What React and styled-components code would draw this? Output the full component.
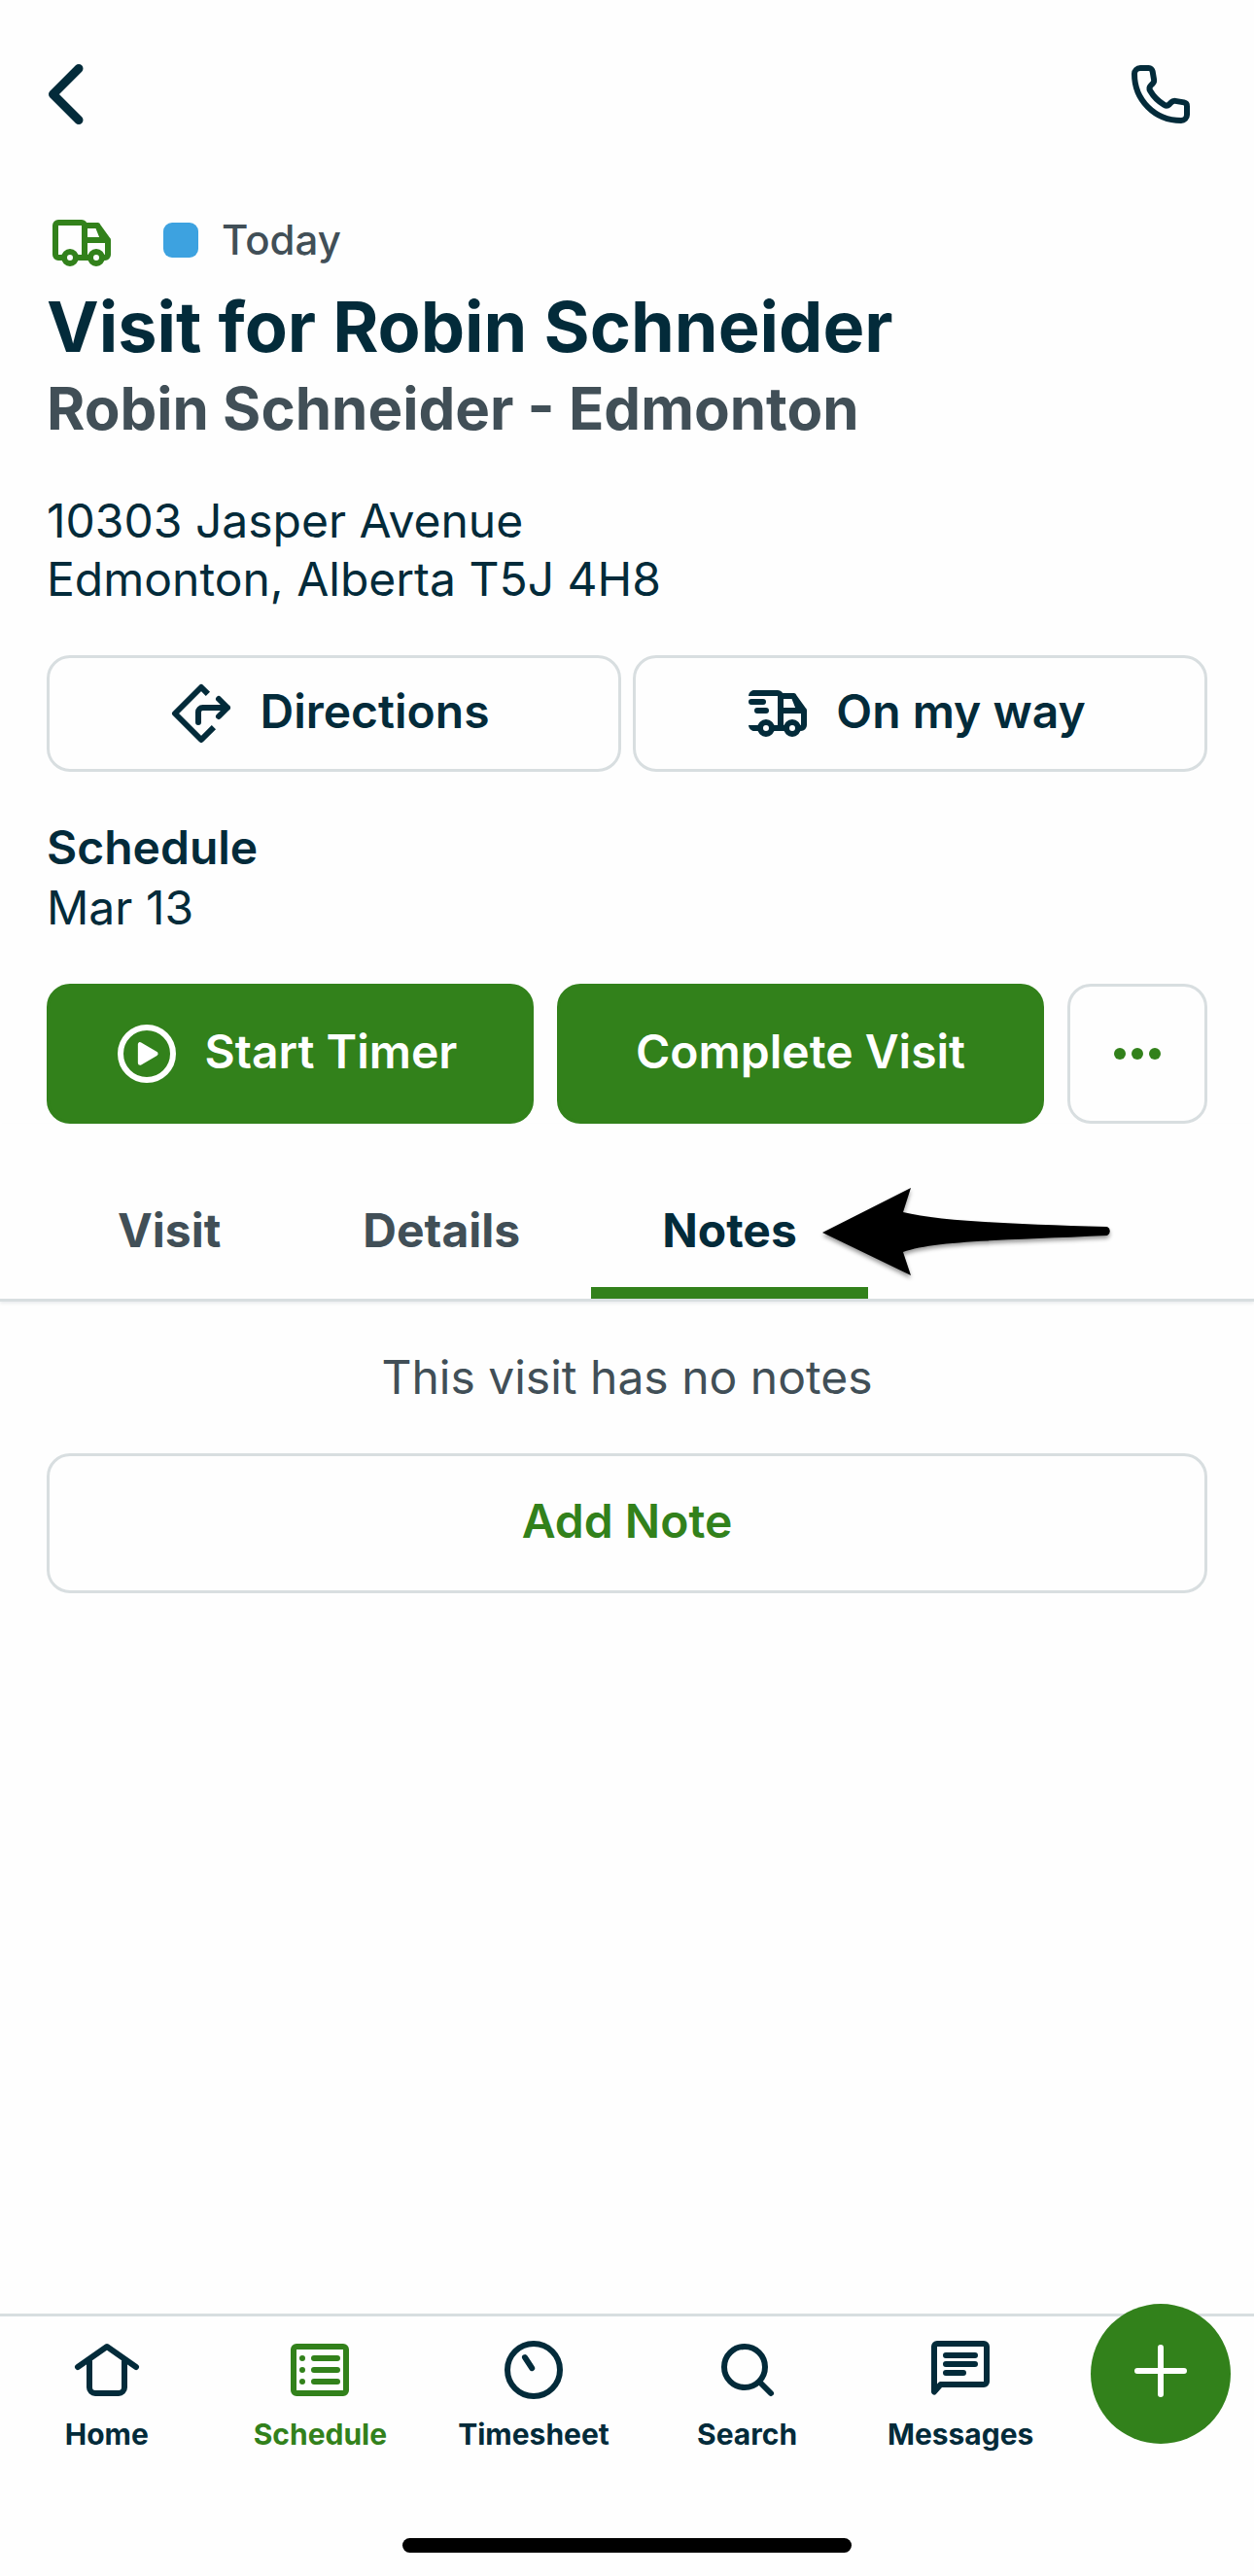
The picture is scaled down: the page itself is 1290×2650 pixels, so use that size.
import React from "react";
import styled, { createGlobalStyle, css } from "styled-components";

const colors = {
  heading: "#032b3a",
  text: "#414f57",
  green: "#32811b",
  blue: "#3da2e0",
  border: "#d8dee0",
};

const GlobalStyle = createGlobalStyle`
  * {
    box-sizing: border-box;
  }
  body {
    margin: 0;
    background: #fefefe;
    color: ${colors.heading};
    font-family: Inter, "Liberation Sans", sans-serif;
  }
  h1, h2, p {
    margin: 0;
  }
`;

function BackIcon() {
  return (
    <IconSvg viewBox="0 0 72 72">
      <path d="M33 9.500 6.500 36 33 62.500" strokeWidth="9" />
    </IconSvg>
  );
}

function PhoneIcon() {
  return (
    <IconSvg viewBox="0 0 24 24">
      <path d="M5 3h2.900a1.300 1.300 0 0 1 1.300 1.100l.5 2.900a1.600 1.600 0 0 1-.5 1.400l-.6.6a1.500 1.500 0 0 0-.2 1.800 13 13 0 0 0 4.800 4.800 1.500 1.500 0 0 0 1.800-.2l.6-.6a1.600 1.600 0 0 1 1.400-.5l3 .5a1.300 1.300 0 0 1 1 1.300V19a2 2 0 0 1-2 2C10 21 3 14 3 5a2 2 0 0 1 2-2z" />
    </IconSvg>
  );
}

function TruckIcon() {
  return (
    <IconSvg viewBox="0 0 24 24">
      <path d="M5 17H4a1 1 0 0 1-1-1V6a1 1 0 0 1 1-1h8a1 1 0 0 1 1 1v11M11 17h4M13 6h4.400L21 11v5a1 1 0 0 1-1 1M13 11h8M17.500 6l2 5" />
      <circle cx="8" cy="17" r="2" />
      <circle cx="17" cy="17" r="2" />
    </IconSvg>
  );
}

function FastTruckIcon() {
  return (
    <IconSvg viewBox="0 0 24 24">
      <path d="M4 5h8a1 1 0 0 1 1 1v11M4 17h2M10 17h5M13 6h4.400L21 11v5a1 1 0 0 1-1 1M13 11h8M17.500 6l2 5M3 8h4M5 11h3" />
      <path
        d="M2 6a2 2 0 0 1 2-2v2zM2 16h2v2a2 2 0 0 1-2-2z"
        fill="currentColor"
        stroke="none"
      />
      <circle cx="8" cy="17" r="2" />
      <circle cx="17" cy="17" r="2" />
    </IconSvg>
  );
}

function DirectionsIcon() {
  return (
    <IconSvg viewBox="0 0 24 24">
      <path d="M14.300 5.300 12 3l-9 9 9 9 4.300-4.300" strokeLinecap="butt" />
      <path d="M11 15v-3.500A1.500 1.500 0 0 1 12.500 10H21M18 7l3 3-3 3" />
    </IconSvg>
  );
}

function PlayIcon() {
  return (
    <IconSvg viewBox="0 0 24 24">
      <circle cx="12" cy="12" r="9" />
      <path
        d="M9.700 8.800v6.400L15.100 12z"
        fill="currentColor"
        strokeWidth="1.500"
      />
    </IconSvg>
  );
}

function MoreIcon() {
  return (
    <IconSvg viewBox="0 0 24 24">
      <g fill="currentColor" stroke="none">
        <circle cx="6" cy="12" r="2" />
        <circle cx="12" cy="12" r="2" />
        <circle cx="18" cy="12" r="2" />
      </g>
    </IconSvg>
  );
}

function HomeIcon() {
  return (
    <IconSvg viewBox="0 0 24 24">
      <path d="M2 11l10-7 10 7M6 9v9a2 2 0 0 0 2 2h8a2 2 0 0 0 2-2V9" />
    </IconSvg>
  );
}

function ScheduleIcon() {
  return (
    <IconSvg viewBox="0 0 24 24">
      <rect x="3" y="4" width="18" height="16" rx="1" />
      <path d="M6 8h0M6 12h0M6 16h0M10 8h8M10 12h8M10 16h8" />
    </IconSvg>
  );
}

function TimesheetIcon() {
  return (
    <IconSvg viewBox="0 0 24 24">
      <circle cx="12" cy="12" r="9" />
      <path d="M9 7.700l2.400 3.700" />
    </IconSvg>
  );
}

function SearchIcon() {
  return (
    <IconSvg viewBox="0 0 24 24">
      <circle cx="11" cy="11" r="7" />
      <path d="M16.500 16.500 20 20" />
    </IconSvg>
  );
}

function MessagesIcon() {
  return (
    <IconSvg viewBox="0 0 24 24">
      <path d="M3 19.500V4a1 1 0 0 1 1-1h16a1 1 0 0 1 1 1v12a1 1 0 0 1-1 1H5.200z" />
      <path d="M7 7h10M7 10h10M7 13h6" />
    </IconSvg>
  );
}

function PlusIcon() {
  return (
    <IconSvg viewBox="0 0 24 24">
      <path d="M12 3v16M4 11h16" />
    </IconSvg>
  );
}

function Arrow() {
  return (
    <ArrowSvg viewBox="0 0 304 100" aria-hidden="true">
      <path d="M0 50 91 4 83 29C120 38 190 41 293 44A5 5 0 0 1 293 53C190 58 115 58 83 70L91 94z" />
    </ArrowSvg>
  );
}

const tabs = ["Visit", "Details", "Notes"];

const navItems = [
  { label: "Home", Icon: HomeIcon },
  { label: "Schedule", Icon: ScheduleIcon, active: true },
  { label: "Timesheet", Icon: TimesheetIcon },
  { label: "Search", Icon: SearchIcon },
  { label: "Messages", Icon: MessagesIcon },
];

function App() {
  return (
    <Page>
      <GlobalStyle />
      <TopBar>
        <IconButton aria-label="Back">
          <BackIcon />
        </IconButton>
        <IconButton aria-label="Call" $inset>
          <PhoneIcon />
        </IconButton>
      </TopBar>

      <Summary>
        <Status>
          <TruckIcon />
          <DateLabel>
            <Swatch />
            Today
          </DateLabel>
        </Status>
        <Title>Visit for Robin Schneider</Title>
        <Subtitle>Robin Schneider - Edmonton</Subtitle>
        <Address>
          10303 Jasper Avenue
          <br />
          Edmonton, Alberta T5J 4H8
        </Address>
        <ButtonRow>
          <Button>
            <DirectionsIcon />
            <ButtonLabel>Directions</ButtonLabel>
          </Button>
          <Button>
            <FastTruckIcon />
            <ButtonLabel>On my way</ButtonLabel>
          </Button>
        </ButtonRow>
        <Schedule>
          <strong>Schedule</strong>
          Mar 13
        </Schedule>
        <ButtonRow $wide>
          <Button $large $primary>
            <PlayIcon />
            <ButtonLabel>Start Timer</ButtonLabel>
          </Button>
          <Button $large $primary>
            <ButtonLabel>Complete Visit</ButtonLabel>
          </Button>
          <MoreButton $large $green aria-label="More actions">
            <MoreIcon />
          </MoreButton>
        </ButtonRow>
      </Summary>

      <TabBar role="tablist">
        {tabs.map((tab) => (
          <Tab
            key={tab}
            role="tab"
            aria-selected={tab === "Notes"}
            $active={tab === "Notes"}
          >
            {tab}
            {tab === "Notes" && <Arrow />}
          </Tab>
        ))}
      </TabBar>

      <Notes>
        <Empty>This visit has no notes</Empty>
        <Button $large $green>
          <ButtonLabel>Add Note</ButtonLabel>
        </Button>
      </Notes>

      <BottomBar>
        <Nav>
          {navItems.map(({ label, Icon, active }) => (
            <NavLink href="#" key={label} $active={active}>
              <Icon />
              {label}
            </NavLink>
          ))}
          <AddButton aria-label="Create">
            <PlusIcon />
          </AddButton>
        </Nav>
        <HomeIndicator />
      </BottomBar>
    </Page>
  );
}

export default App;

const Page = styled.div`
  min-height: 100vh;
  display: flex;
  flex-direction: column;
`;

const IconSvg = styled.svg`
  width: 72px;
  height: 72px;
  flex-shrink: 0;
  display: block;
  fill: none;
  stroke: currentColor;
  stroke-width: 2;
  stroke-linecap: round;
  stroke-linejoin: round;
`;

const TopBar = styled.header`
  display: flex;
  justify-content: space-between;
  padding: 61px 48px 0;
`;

const IconButton = styled.button`
  padding: 0;
  margin-right: ${(props) => (props.$inset ? "12px" : "0")};
  border: 0;
  background: none;
  color: ${colors.heading};
`;

const Summary = styled.main`
  padding: 81px 48px 0;
`;

const Status = styled.div`
  display: flex;
  align-items: center;
  gap: 48px;
  color: ${colors.green};
`;

const DateLabel = styled.div`
  display: flex;
  align-items: center;
  gap: 24px;
  padding-bottom: 6px;
  color: ${colors.text};
  font-size: 42px;
  line-height: 60px;
  font-weight: 500;
`;

const Swatch = styled.span`
  width: 36px;
  height: 36px;
  border-radius: 9px;
  background: ${colors.blue};
`;

const Title = styled.h1`
  padding-top: 8px;
  font-size: 72px;
  line-height: 84px;
  font-weight: 700;
`;

const Subtitle = styled.h2`
  color: ${colors.text};
  font-size: 60px;
  line-height: 84px;
  font-weight: 700;
`;

const Address = styled.p`
  padding: 44px 0 48px;
  font-size: 48px;
  line-height: 60px;
`;

const Schedule = styled.p`
  padding: 48px 0;
  font-size: 48px;
  line-height: 60px;

  strong {
    display: block;
    margin-bottom: 2px;
    font-weight: 600;
  }
`;

const ButtonRow = styled.div`
  display: flex;
  gap: ${(props) => (props.$wide ? "24px" : "12px")};
`;

const Button = styled.button`
  flex: 1 1 0;
  display: flex;
  align-items: center;
  justify-content: center;
  gap: 12px;
  height: ${(props) => (props.$large ? "144px" : "120px")};
  padding: 0;
  border: 3px solid ${colors.border};
  border-radius: 24px;
  background: none;
  color: ${(props) => (props.$green ? colors.green : colors.heading)};
  font-family: inherit;
  font-size: 48px;
  line-height: 60px;
  font-weight: 600;

  ${(props) =>
    props.$primary &&
    css`
      border-color: ${colors.green};
      background: ${colors.green};
      color: #ffffff;
    `}
`;

const ButtonLabel = styled.span`
  padding: 0 12px 4px;
`;

const MoreButton = styled(Button)`
  flex: 0 0 144px;
`;

const TabBar = styled.div`
  display: flex;
  height: 183px;
  padding: 0 48px;
  border-bottom: 3px solid ${colors.border};
  box-shadow: 0 2px 3px rgba(3, 43, 58, 0.08);
`;

const Tab = styled.button`
  position: relative;
  padding: 52px 73px 0;
  border: 0;
  border-bottom: 12px solid
    ${(props) => (props.$active ? colors.green : "transparent")};
  background: none;
  color: ${(props) => (props.$active ? colors.heading : colors.text)};
  font-family: inherit;
  font-size: 48px;
  line-height: 60px;
  font-weight: 700;
`;

/* hand-drawn pointer that floats next to the active tab */
const ArrowSvg = styled.svg`
  position: absolute;
  left: 238px;
  top: 62px;
  width: 304px;
  height: 100px;
  overflow: visible;
  fill: #000000;
  filter: drop-shadow(0 3px 2px rgba(0, 0, 0, 0.4));
`;

const Notes = styled.section`
  flex: 1;
  display: flex;
  flex-direction: column;
  padding: 48px 48px 0;

  button {
    flex: none;
  }
`;

const Empty = styled.p`
  padding-bottom: 48px;
  color: ${colors.text};
  font-size: 48px;
  line-height: 60px;
  text-align: center;
`;

const BottomBar = styled.footer`
  border-top: 3px solid ${colors.border};
`;

const Nav = styled.nav`
  display: flex;
  align-items: flex-start;
  height: 228px;
`;

const NavLink = styled.a`
  flex: 1 1 0;
  display: flex;
  flex-direction: column;
  align-items: center;
  padding-top: 19px;
  color: ${(props) => (props.$active ? colors.green : colors.heading)};
  font-size: 30px;
  line-height: 60px;
  font-weight: 700;
  text-decoration: none;
`;

const AddButton = styled.button`
  display: grid;
  place-items: center;
  width: 144px;
  height: 144px;
  margin: -13px 24px 0;
  padding: 0;
  border: 0;
  border-radius: 50%;
  background: ${colors.green};
  color: #ffffff;
`;

const HomeIndicator = styled.div`
  width: 462px;
  height: 15px;
  margin: 0 auto 24px;
  border-radius: 8px;
  background: #000000;
`;
